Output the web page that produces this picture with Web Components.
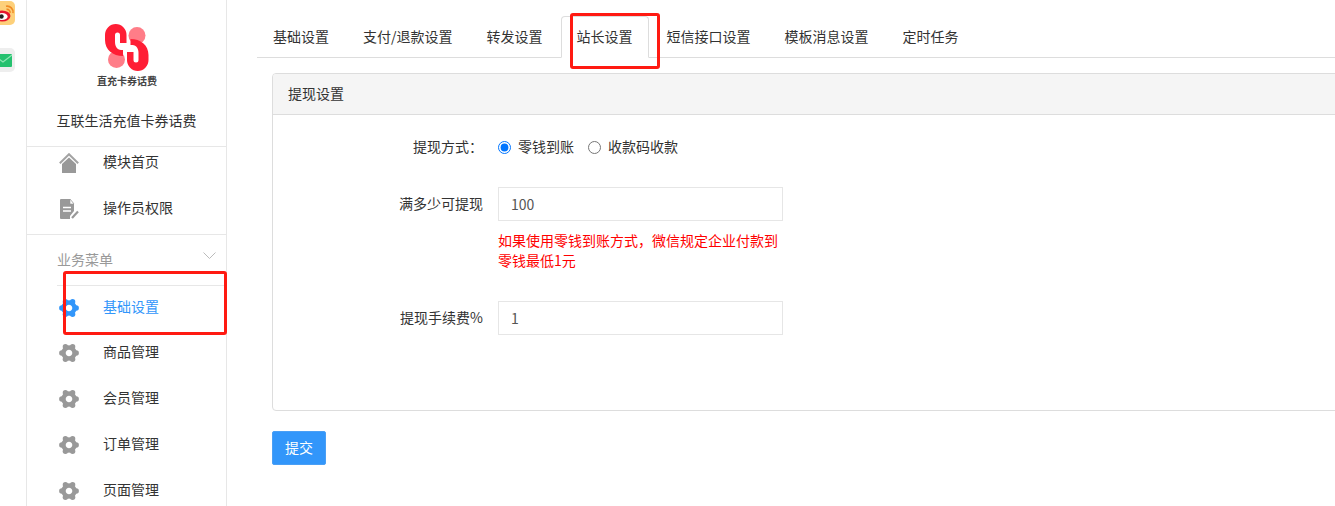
<!DOCTYPE html>
<html lang="zh"><head><meta charset="utf-8"><title>提现设置</title>
<style>
html,body{margin:0;padding:0;background:#fff;}
body{font:14px/20px "Noto Sans CJK SC","Liberation Sans",sans-serif;color:#333;}
</style></head><body>
<x-app>
  <x-dock slot="dock"></x-dock>
  <x-sidebar slot="side">
    <x-side-group first>
      <x-side-item icon="home">模块首页</x-side-item>
      <x-side-item icon="doc">操作员权限</x-side-item>
    </x-side-group>
    <x-side-group heading="业务菜单">
      <x-side-item icon="gear" active>基础设置</x-side-item>
      <x-side-item icon="gear">商品管理</x-side-item>
      <x-side-item icon="gear">会员管理</x-side-item>
      <x-side-item icon="gear">订单管理</x-side-item>
      <x-side-item icon="gear">页面管理</x-side-item>
    </x-side-group>
  </x-sidebar>
  <x-tabs slot="tabs">
    <x-tab>基础设置</x-tab><x-tab>支付/退款设置</x-tab><x-tab>转发设置</x-tab><x-tab active>站长设置</x-tab><x-tab>短信接口设置</x-tab><x-tab>模板消息设置</x-tab><x-tab>定时任务</x-tab>
  </x-tabs>
  <x-panel slot="main" heading="提现设置">
    <x-field label="提现方式：">
      <x-radio checked name="way">零钱到账</x-radio><x-radio name="way">收款码收款</x-radio>
    </x-field>
    <x-field label="满多少可提现" value="100" help="如果使用零钱到账方式，微信规定企业付款到零钱最低1元"></x-field>
    <x-field label="提现手续费%" value="1"></x-field>
  </x-panel>
  <x-button slot="main">提交</x-button>
  <x-mark slot="marks" style="left:570px;top:13px;width:84px;height:50px"></x-mark>
  <x-mark slot="marks" style="left:63px;top:271px;width:158px;height:58px"></x-mark>
</x-app>
<script>
const def=(name,html,extra={})=>{
  const tpl=document.createElement('template');tpl.innerHTML=html;
  class E extends HTMLElement{
    constructor(){super();this.attachShadow({mode:'open'}).appendChild(tpl.content.cloneNode(true));}
    connectedCallback(){extra.init&&extra.init.call(this,this.shadowRoot);}
  }
  customElements.define(name,E);
};
def('x-app',`<style>
:host{display:flex;width:1335px;height:506px;overflow:hidden;position:relative;}
.main{flex:1;min-width:0;display:flex;flex-direction:column;overflow:hidden;}
.body{padding-left:45px;display:flex;flex-direction:column;align-items:flex-start;}
</style><slot name="dock"></slot><slot name="side"></slot>
<div class="main"><slot name="tabs"></slot><div class="body"><slot name="main"></slot></div></div><slot name="marks"></slot>`);

def('x-dock',`<style>
:host{display:flex;flex:none;flex-direction:column;width:26px;overflow:hidden;gap:23px;padding-top:1px;box-sizing:border-box;}
svg{display:block;margin-left:-9px;width:24px;height:24px;flex:none;}
</style>
<svg viewBox="0 0 24 24"><rect width="24" height="24" rx="5" fill="#fdd07a"/>
<ellipse cx="11" cy="15" rx="8.5" ry="5.5" fill="#e6162d"/><ellipse cx="11" cy="15.5" rx="5.6" ry="3.6" fill="#fff"/><circle cx="10.5" cy="15.5" r="2.2" fill="#222"/>
<path d="M15 5.2a6 6 0 0 1 7 7M15.5 8.4a3 3 0 0 1 3.5 3.5" fill="none" stroke="#f08a24" stroke-width="1.6"/></svg>
<svg viewBox="0 0 24 24"><rect width="24" height="24" rx="5" fill="#eeeeee"/>
<rect x="3" y="6" width="18" height="13" rx="1" fill="#25c16f"/><path d="M3 7l9 7 9-7" fill="none" stroke="#8fe6b4" stroke-width="1.2"/></svg>`);

def('x-sidebar',`<style>
:host{display:block;flex:none;box-sizing:border-box;width:201px;height:506px;border-left:1px solid #e7e7e7;border-right:1px solid #e7e7e7;overflow:hidden;}
.top{display:flex;flex-direction:column;align-items:center;padding:24px 0 16px;border-bottom:1px solid #e7e7e7;}
svg{display:block;width:44px;height:47px;margin-left:1px;}
.cap{font-size:10px;line-height:20px;font-weight:700;color:#444;margin-left:1px;}
.name{margin-top:19px;line-height:20px;color:#333;}
</style>
<div class="top">
<svg viewBox="105 24 44 47">
<circle cx="137" cy="35.500" r="8.500" fill="#ff7d88"/><circle cx="116.500" cy="59.500" r="8.500" fill="#ff7d88"/>
<path id="a" d="M126.500 43V35A10.750 11 0 0 0 105 35V40C105 50 113 56 123 56V50H121C117 50 115 46 115 42V35A2.500 2.500 0 0 1 120 35V43Z" fill="#ff1e35"/>
<path d="M126.500 43V35A10.750 11 0 0 0 105 35V40C105 50 113 56 123 56V50H121C117 50 115 46 115 42V35A2.500 2.500 0 0 1 120 35V43Z" fill="#ff1e35" transform="rotate(180 126.750 47.500)"/>
</svg>
<div class="cap">直充卡券话费</div>
<div class="name">互联生活充值卡券话费</div>
</div><slot></slot>`);

def('x-side-group',`<style>
:host{display:block;border-bottom:1px solid #e7e7e7;}
:host([first]){padding:1px 0 10px;}
.h{display:none;height:50px;margin-left:30px;border-bottom:1px solid #e7e7e7;color:#999;align-items:center;justify-content:space-between;}
.t{padding-bottom:2px;}
:host([heading]) .h{display:flex;}
svg{width:13px;height:8px;margin:-8px 10px 0 0;}
:host([heading]) .list{padding-top:7px;}
.list{display:flex;flex-direction:column;gap:16px;}
::slotted([active]){margin-bottom:-1px;}
</style><div class="h"><span class="t"></span><svg viewBox="0 0 13 8"><path d="M.5.5l6 6 6-6" fill="none" stroke="#bbb"/></svg></div><div class="list"><slot></slot></div>`,{
 init(r){r.querySelector('.t').textContent=this.getAttribute('heading')||'';}
});

const ICONS={
 home:`<svg viewBox="0 0 20 20" width="20" height="20"><path d="M.8 10.200L10 1.200l9.200 9" fill="none" stroke="#a3a3a3" stroke-width="2"/><path d="M10 4.500l7 6.500v9H3v-9z" fill="#999"/></svg>`,
 doc:`<svg viewBox="0 0 20 20" width="20" height="20"><path d="M1 1q0-1 1-1h9l4 4.500V12l-4 5v3H2q-1 0-1-1z" fill="#999"/><path d="M11 0v5h4z" fill="#fff" stroke="#999" stroke-width=".6"/><path d="M4 8.500h8M4 12h8" stroke="#fff" stroke-width="1.500"/><path d="M13 19l6-6.500" stroke="#999" stroke-width="2.200"/></svg>`,
 gear:`<svg viewBox="-10 -10 20 20" width="20" height="20"><g fill="currentColor"><circle cx="7.200" cy="0" r="2.700"/><circle cx="-7.200" cy="0" r="2.700"/><circle cx="3.600" cy="6.240" r="2.700"/><circle cx="-3.600" cy="6.240" r="2.700"/><circle cx="3.600" cy="-6.240" r="2.700"/><circle cx="-3.600" cy="-6.240" r="2.700"/></g><circle r="3.300" fill="#fff"/><circle r="5.500" fill="none" stroke="currentColor" stroke-width="4.400"/></svg>`
};
def('x-side-item',`<style>
:host{display:flex;align-items:center;height:30px;padding-left:32px;color:#333;}
:host([active]){color:#3296fa;}
.i{width:20px;height:20px;margin-right:24px;flex:none;color:#999;display:block;line-height:0;}
:host([active]) .i{color:#3296fa;}
.x{padding-bottom:4px;}
</style><span class="i"></span><span class="x"><slot></slot></span>`,{
 init(r){r.querySelector('.i').innerHTML=ICONS[this.getAttribute('icon')]||'';}
});

def('x-tabs',`<style>
:host{display:block;flex:none;padding:16px 0 0 30px;height:42px;}
.w{display:flex;gap:2px;box-sizing:border-box;border-bottom:1px solid #ddd;height:42px;}
</style><div class="w"><slot></slot></div>`);
def('x-tab',`<style>
:host{display:block;box-sizing:border-box;height:42px;padding:9px 15px 11px;border:1px solid transparent;border-radius:4px 4px 0 0;color:#333;background:transparent;}
:host([active]){border-color:#ddd #ddd #fff;background:#fff;}
</style><slot></slot>`);

def('x-panel',`<style>
:host{display:block;box-sizing:border-box;width:1100px;margin-top:15px;height:338px;border:1px solid #ddd;border-radius:4px;background:#fff;}
.h{height:40px;line-height:38px;padding-left:15px;background:#f5f5f5;border-bottom:1px solid #ddd;border-radius:3px 3px 0 0;color:#333;}
.b{padding-top:15px;display:flex;flex-direction:column;gap:23px;}
</style><div class="h"></div><div class="b"><slot></slot></div>`,{
 init(r){r.querySelector('.h').textContent=this.getAttribute('heading');}
});

def('x-field',`<style>
:host{display:flex;align-items:flex-start;gap:15px;}
.l{width:210px;flex:none;text-align:right;height:34px;line-height:32px;color:#333;}
.c{width:285px;flex:none;}
.r{display:flex;align-items:center;height:34px;gap:14px;white-space:nowrap;}
input{display:block;box-sizing:border-box;width:285px;height:34px;border:1px solid #e6e6e6;outline:0;padding:0 12px;font:14px "Noto Sans CJK SC","Liberation Sans",sans-serif;color:#555;background:#fff;}
.help{margin-top:9px;line-height:20px;color:#f00;margin-bottom:8px;}
.help:empty{display:none}
</style><div class="l"></div><div class="c"></div>`,{
 init(r){
  r.querySelector('.l').textContent=this.getAttribute('label');
  const c=r.querySelector('.c');
  if(this.hasAttribute('value')){
    const i=document.createElement('input');i.value=this.getAttribute('value');c.appendChild(i);
    const h=document.createElement('div');h.className='help';h.textContent=this.getAttribute('help')||'';c.appendChild(h);
  }else{
    const d=document.createElement('div');d.className='r';d.appendChild(document.createElement('slot'));c.appendChild(d);
  }
 }
});
def('x-radio',`<style>
:host{display:inline-flex;align-items:center;gap:7px;color:#333;}
input{margin:0;width:13px;height:13px;flex:none;}
.x{padding-bottom:2px;}
</style><input type="radio"><span class="x"><slot></slot></span>`,{
 init(r){const i=r.querySelector('input');i.checked=this.hasAttribute('checked');}
});
def('x-button',`<style>
:host{display:block;box-sizing:border-box;margin-top:20px;height:34px;padding:5px 12px 7px;border:1px solid #4a9ff5;border-radius:2px;background:#3296fa;color:#fff;line-height:20px;}
</style><slot></slot>`);
def('x-mark',`<style>
:host{display:block;position:absolute;border:3px solid #ff1a12;border-radius:3px;pointer-events:none;}
</style>`);
</script>
</body></html>
